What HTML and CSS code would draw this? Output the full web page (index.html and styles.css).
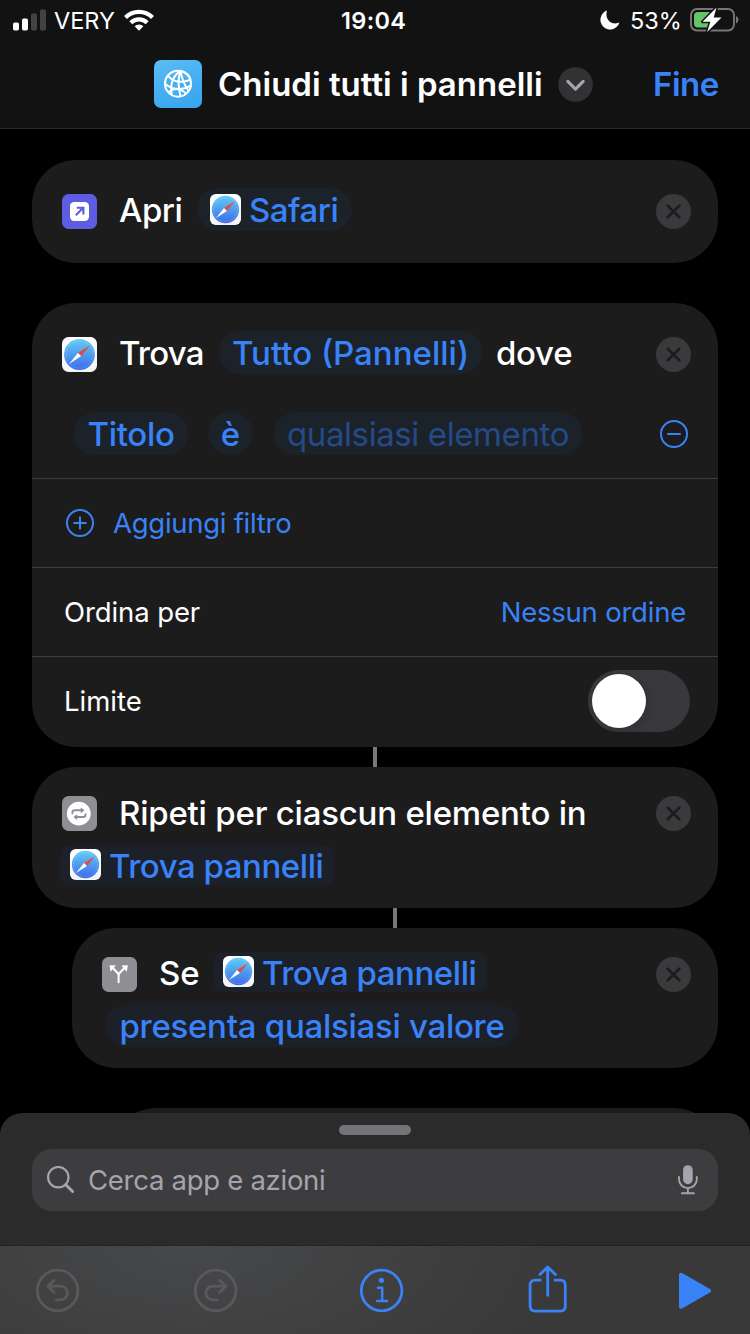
FILE: index.html
```html
<!DOCTYPE html>
<html lang="it">
<head>
<meta charset="utf-8">
<title>Chiudi tutti i pannelli</title>
<link rel="stylesheet" href="styles.css">
</head>
<body>
<svg class="defs" width="0" height="0" aria-hidden="true">
  <defs>
    <linearGradient id="sky" x1="0" y1="0" x2="0" y2="1"><stop offset="0" stop-color="#62cdf5"/><stop offset="1" stop-color="#3c6bea"/></linearGradient>
    <linearGradient id="plate" x1="0" y1="0" x2="0" y2="1"><stop offset="0" stop-color="#fff"/><stop offset="1" stop-color="#f4f4f4"/></linearGradient>
    <symbol id="safari" viewBox="0 0 35 35">
      <rect width="35" height="35" rx="6.5" fill="url(#plate)"/>
      <circle cx="17.5" cy="17.5" r="15.4" fill="url(#sky)"/>
      <circle cx="17.5" cy="17.5" r="13.6" fill="none" stroke="#fff" stroke-opacity=".35" stroke-width="1.2" stroke-dasharray=".6 1.2"/>
      <path d="M28.2 8.2 19.1 19.1 15.9 15.9Z" fill="#e9483f"/>
      <path d="M6.8 27.2 15.9 15.9 19.1 19.1Z" fill="#fff"/>
    </symbol>
    <symbol id="close" viewBox="0 0 35 35">
      <circle cx="17.5" cy="17.5" r="17.5" fill="#3a3a3c"/>
      <path d="M11.7 11.7 23.3 23.3M23.3 11.7 11.7 23.3" stroke="#1c1c1e" stroke-width="2.7" stroke-linecap="round"/>
    </symbol>
  </defs>
</svg>
<div class="screen">
  <header class="top">
    <div class="status">
      <svg class="signal" width="33" height="22" viewBox="0 0 33 22"><g fill="#fff"><rect y="13.5" width="6" height="8" rx="1.7"/><rect x="9" y="9.5" width="6" height="12" rx="1.7"/></g><g fill="#424242"><rect x="18" y="4.5" width="6" height="17" rx="1.7"/><rect x="27" y=".5" width="6" height="21" rx="1.7"/></g></svg>
      <span class="carrier">VERY</span>
      <svg class="wifi" width="30" height="22" viewBox="0 0 30 22"><g fill="none" stroke="#fff" stroke-width="4.2"><path d="M1.5 8.4a19.3 19.3 0 0 1 27 0"/><path d="M6.8 13.8a11.6 11.6 0 0 1 16.4 0"/></g><path d="M15 21.7 10.6 17.3a6.2 6.2 0 0 1 8.8 0Z" fill="#fff"/></svg>
      <span class="clock">19:04</span>
      <svg class="moon" width="20" height="20" viewBox="0 0 20 20"><path d="M7 .6A9.7 9.7 0 1 0 19.4 12.6C13 15.4 4 10.6 7 .6Z" fill="#fff"/></svg>
      <span class="percent">53%</span>
      <svg class="battery" width="49" height="26" viewBox="0 0 49 26"><rect x="1" y="2" width="43" height="21.5" rx="6" fill="none" stroke="#777" stroke-width="1.9"/><path d="M46 9q2.5 1.2 2.5 3.7T46 16.4Z" fill="#777"/><path d="M8 5h15v15.5H8a4 4 0 0 1-4-4V9a4 4 0 0 1 4-4Z" fill="#65c466"/><path d="M26.5.5 12.5 14.8h7.8L17.2 25 31.5 10.6h-7.8Z" fill="#fff" stroke="#121212" stroke-width="3" stroke-linejoin="round" paint-order="stroke"/></svg>
    </div>
    <div class="titlebar">
      <svg class="app-icon" width="48" height="48" viewBox="0 0 48 48"><defs><linearGradient id="app" x1="0" y1="0" x2=".4" y2="1"><stop offset="0" stop-color="#5bbdf4"/><stop offset="1" stop-color="#3aa7ef"/></linearGradient></defs><rect width="48" height="48" rx="7" fill="url(#app)"/><g fill="none" stroke="#fff" stroke-width="2"><circle cx="24" cy="23.7" r="13"/><path d="M26.5 10.8Q14.5 19 18 35.5M26.5 10.8Q22.5 23 26.7 36.6M26.5 10.8Q28 21 34.5 31M26.5 10.8Q35 13.5 36.7 20M14 15.8Q22 25 36 20M11.2 24Q23 33.5 37 25.4M14.5 32Q23 25.5 32 33.5"/></g></svg>
      <span class="title">Chiudi tutti i pannelli</span>
      <svg class="chevron" width="35" height="35" viewBox="0 0 35 35"><circle cx="17.5" cy="17.5" r="17.3" fill="#323234"/><path d="M9.8 14.4 17.5 22.2 25.2 14.4" fill="none" stroke="#a5a5ab" stroke-width="3.1" stroke-linecap="round" stroke-linejoin="round"/></svg>
      <span class="done">Fine</span>
    </div>
  </header>

  <main class="flow">
    <section class="card card-open">
      <div class="row">
        <svg class="icon" viewBox="0 0 35 35"><rect width="35" height="35" rx="6.5" fill="#5e5ce0"/><rect x="8" y="8" width="19" height="19" rx="4.2" fill="#fff"/><path d="M13.8 21.2 20.7 14.3M14.8 13.8h6.6v6.6" fill="none" stroke="#5e5ce0" stroke-width="2.1"/></svg>
        <span class="word w-apri">Apri</span>
        <span class="chip chip-safari"><svg class="mini"><use href="#safari"/></svg><span class="w-safari">Safari</span></span>
        <svg class="close"><use href="#close"/></svg>
      </div>
    </section>

    <section class="card card-find">
      <div class="row">
        <svg class="icon"><use href="#safari"/></svg>
        <span class="word w-trova">Trova</span>
        <span class="chip chip-all"><span class="w-all">Tutto (Pannelli)</span></span>
        <span class="w-dove">dove</span>
        <svg class="close"><use href="#close"/></svg>
      </div>
      <div class="row filter">
        <span class="chip chip-title"><span class="w-titolo">Titolo</span></span>
        <span class="chip chip-is">è</span>
        <span class="chip chip-any"><span class="w-any">qualsiasi elemento</span></span>
        <svg class="minus" width="28" height="28" viewBox="0 0 28 28"><g fill="none" stroke="#3a82f7" stroke-width="2" stroke-linecap="round"><circle cx="14" cy="14" r="13"/><path d="M8 14h12"/></g></svg>
      </div>
      <div class="option">
        <svg class="plus" width="28" height="28" viewBox="0 0 28 28"><g fill="none" stroke="#3a82f7" stroke-width="2" stroke-linecap="round"><circle cx="14" cy="14" r="13"/><path d="M8.3 14h11.4M14 8.3v11.4"/></g></svg>
        <span class="blue w-add">Aggiungi filtro</span>
      </div>
      <div class="option"><span class="w-sort">Ordina per</span><span class="blue w-none">Nessun ordine</span></div>
      <div class="option"><span class="w-limit">Limite</span><span class="switch"><span class="knob"></span></span></div>
    </section>

    <div class="link"></div>

    <section class="card card-repeat">
      <div class="row">
        <svg class="icon" viewBox="0 0 35 35"><rect width="35" height="35" rx="6.5" fill="#8e8e93"/><circle cx="16.8" cy="17.7" r="11.9" fill="#fff"/><g fill="none" stroke="#8e8e93" stroke-width="1.9" stroke-linecap="round" stroke-linejoin="round"><path d="M10.4 17.2v-.6q0-2.3 2.4-2.3h6.5M23.5 18.1v.6q0 2.3-2.4 2.3h-6.5"/></g><path d="M18.7 11.4 22.5 14.3 18.7 17.2ZM15.2 18.2 11.4 21.1 15.2 24Z" fill="#8e8e93"/></svg>
        <span class="word w-repeat">Ripeti per ciascun elemento in</span>
        <svg class="close"><use href="#close"/></svg>
      </div>
      <span class="chip variable"><svg class="mini"><use href="#safari"/></svg><span class="w-found">Trova pannelli</span></span>
    </section>

    <div class="link link-nested"></div>

    <section class="card card-if">
      <div class="row">
        <svg class="icon" viewBox="0 0 35 35"><rect width="35" height="35" rx="6.5" fill="#8e8e93"/><path d="M16.6 25.3v-6.5q0-1.7-1.2-3L11 11.2M16.6 18.8q0-1.7 1.2-3l4.4-4.6" fill="none" stroke="#fff" stroke-width="2" stroke-linecap="round"/><path d="M7.6 8.3 14 8.5 8.5 14.7ZM25.9 8.3 19.2 8.5 24.8 14.7Z" fill="#fff"/></svg>
        <span class="word w-se">Se</span>
        <span class="chip variable"><svg class="mini"><use href="#safari"/></svg><span class="w-found">Trova pannelli</span></span>
        <svg class="close"><use href="#close"/></svg>
      </div>
      <span class="chip chip-has"><span class="w-has">presenta qualsiasi valore</span></span>
    </section>

    <section class="card card-next"></section>
  </main>

  <footer class="sheet">
    <div class="grabber"></div>
    <div class="search">
      <svg class="lens" width="28" height="28" viewBox="0 0 28 28"><g fill="none" stroke="#a5a4ac" stroke-linecap="round"><circle cx="11.3" cy="11.2" r="10.2" stroke-width="2.2"/><path d="M18.8 18.7 25.6 25.5" stroke-width="3"/></g></svg>
      <span class="w-search">Cerca app e azioni</span>
      <svg class="mic" width="20" height="30" viewBox="0 0 20 30"><rect x="5.1" y=".2" width="9.6" height="19" rx="4.8" fill="#a5a4ac"/><path d="M1 12v2.2a8.9 8.9 0 0 0 17.8 0V12M9.9 23v5M3.9 28.3h12" fill="none" stroke="#a5a4ac" stroke-width="1.9" stroke-linecap="round"/></svg>
    </div>
    <nav class="toolbar">
      <svg width="44" height="44" viewBox="0 0 44 44"><g fill="none" stroke="#59595b" stroke-width="2.8" stroke-linecap="round" stroke-linejoin="round"><circle cx="21.6" cy="22.5" r="20.3"/><path d="M18 12.3 11.9 18.2 18 24.2M11.9 18.2H24.7a6.8 6.8 0 0 1 0 13.6H20.4"/></g></svg>
      <svg width="44" height="44" viewBox="0 0 44 44"><g fill="none" stroke="#59595b" stroke-width="2.8" stroke-linecap="round" stroke-linejoin="round"><circle cx="21.6" cy="22.5" r="20.3"/><path d="M25.6 12.3 31.7 18.2 25.6 24.2M31.7 18.2H18.7a6.8 6.8 0 0 0 0 13.6H23"/></g></svg>
      <svg width="44" height="44" viewBox="0 0 44 44"><circle cx="21.6" cy="22.5" r="20.3" fill="none" stroke="#3a82f7" stroke-width="2.8"/><circle cx="21.4" cy="12.3" r="2.6" fill="#3a82f7"/><path d="M17.9 19.7h4.3v13M17.1 33h10" fill="none" stroke="#3a82f7" stroke-width="2.5" stroke-linecap="round" stroke-linejoin="round"/></svg>
      <svg width="40" height="50" viewBox="0 0 40 50"><g fill="none" stroke="#3a82f7" stroke-width="2.8" stroke-linecap="butt" stroke-linejoin="round"><path d="M13.6 15.2H7.1q-5 0-5 5v20.9q0 5 5 5h25.2q5 0 5-5V20.2q0-5-5-5h-6.6"/><path d="M19.7 30.4V2.8M11.9 9.6 19.7 2 27.5 9.6" stroke-linecap="round"/></g></svg>
      <svg width="34" height="38" viewBox="0 0 34 38"><path d="M3 3.7 31 19.7 3 35.7Z" fill="#3a82f7" stroke="#3a82f7" stroke-width="4" stroke-linejoin="round"/></svg>
    </nav>
  </footer>
</div>
</body>
</html>
```
FILE: styles.css
```css
* { box-sizing: border-box; }
body { margin: 0; background: #000; }
.defs { display: block; }
svg { display: block; flex: none; }
span { white-space: nowrap; }
.screen {
  width: 750px; height: 1334px; overflow: hidden;
  display: flex; flex-direction: column;
  background: #000; color: #fff;
  font-family: Inter, "Liberation Sans", sans-serif;
  font-size: 33px; font-weight: 500; line-height: 42px;
}

/* header */
.top { flex: none; height: 129px; background: #121212; border-bottom: 1px solid #2a2a2a; }
.status { height: 40px; display: flex; align-items: center; padding-left: 13px; font-size: 23.5px; font-weight: 400; line-height: 30px; }
.status span { padding-top: 2px; }
.signal { margin-top: -1px; }
.carrier { width: 69px; margin-left: 8px; }
.wifi { margin-left: 1px; }
.clock { width: 69px; margin-left: 187px; font-weight: 600; letter-spacing: .35px; }
.moon { margin-left: 190px; }
.percent { width: 61px; margin-left: 10px; }
.battery { margin-left: -1px; }
.titlebar { height: 88px; display: flex; align-items: center; padding-left: 154px; font-weight: 600; }
.title { width: 340px; margin-left: 16px; }
.done { margin-left: 60px; color: #3a82f7; letter-spacing: -.5px; }

/* action cards */
.flow { flex: none; height: 984px; overflow: hidden; padding: 31px 32px 0; }
.card { background: #1c1c1c; border-radius: 44px; }
.row { display: flex; align-items: center; }
.icon { width: 35px; height: 35px; }
.close { width: 35px; height: 35px; margin-left: auto; }
.card-open .icon, .card-open .close, .card-find .icon, .card-find .close { margin-top: 3px; }
.word { margin-left: 22px; }
.chip { display: inline-flex; align-items: center; height: 43px; border-radius: 21.5px; background: #1c2229; color: #3a82f7; }
.mini { width: 31px; height: 31px; }
.card-open { height: 103px; padding: 28px 27px 0 30px; }
.w-apri { width: 65px; letter-spacing: -.5px; }
.chip-safari { width: 155px; margin-left: 13px; padding-left: 13px; gap: 8px; }
.w-safari { letter-spacing: -.5px; }
.card-find { height: 444px; margin-top: 40px; padding-top: 28px; }
.card-find .row { padding: 0 27px 0 30px; }
.w-trova { width: 86px; letter-spacing: -.8px; }
.chip-all { width: 263px; margin-left: 14px; padding-left: 13px; }
.w-dove { margin-left: 14px; letter-spacing: -.3px; }
.card-find .filter { height: 43px; margin-top: 38px; margin-bottom: 23px; padding: 0 30px 0 42px; }
.chip-title { width: 114px; justify-content: center; letter-spacing: -.3px; }
.chip-is { width: 45px; margin-left: 20px; justify-content: center; }
.chip-any { width: 308px; margin-left: 21px; justify-content: center; color: #254a86; font-weight: 400; letter-spacing: -.4px; }
.minus { margin-left: auto; }
.option { height: 89px; display: flex; align-items: center; justify-content: space-between; padding: 0 32px; border-top: 1px solid #3d3d3e; font-size: 27.5px; font-weight: 400; line-height: 36px; }
.plus { margin-left: 2px; margin-right: 19px; }
.w-add { flex: 1; letter-spacing: -.27px; }
.w-sort { letter-spacing: -.1px; }
.w-none { letter-spacing: -.22px; }
.blue { color: #3a82f7; }
.switch { width: 102px; height: 62px; margin-right: -4px; padding: 4px; border-radius: 31px; background: #39393d; }
.knob { display: block; width: 54px; height: 54px; border-radius: 50%; background: #fff; box-shadow: 3px 3px 10px rgba(0,0,0,.15); }
.link { width: 4px; height: 20px; margin-left: 341px; background: #77777c; }
.link-nested { margin-left: 361px; }
.card-repeat { height: 141px; padding: 25px 27px 0 28px; }
.card-repeat .row { height: 43px; padding-left: 2px; }
.w-repeat { margin-top: -2px; letter-spacing: -.22px; }
.variable { width: 274px; height: 40px; padding-left: 10px; gap: 8px; border-radius: 10px; background: #1c2028; }
.variable .mini { margin-top: -1px; }
.w-found { padding-top: 2px; letter-spacing: -.47px; }
.card-repeat .variable { display: flex; margin-top: 10px; }
.card-if { height: 140px; margin-left: 40px; padding: 24px 27px 0 30px; }
.card-if .row { height: 43px; }
.card-if .icon, .card-if .close { margin-top: 2px; }
.w-se { width: 41px; margin-top: -2px; }
.card-if .variable { margin-left: 13px; margin-top: -3px; }
.chip-has { display: flex; width: 412px; margin: 9px 0 0 4px; justify-content: center; background: #1c2028; letter-spacing: -.28px; }
.card-next { height: 120px; margin: 40px 0 0 80px; }

/* library sheet */
.sheet { flex: none; height: 221px; border-radius: 22px 22px 0 0; background: #2b2b2b; overflow: hidden; }
.grabber { width: 72px; height: 10px; margin: 12px auto 14px; border-radius: 5px; background: #747378; }
.search { display: flex; align-items: center; height: 62px; margin: 0 32px 34px; padding: 0 20px 0 15px; border-radius: 20px; background: #3d3d3f; color: #a5a4ac; font-size: 27.5px; font-weight: 400; }
.w-search { margin-left: 13px; letter-spacing: -.28px; }
.mic { margin-left: auto; }
.toolbar {
  height: 89px; display: grid; grid-template-columns: 158px 166px 168px 150px 34px; align-items: center; padding-left: 36px;
  border-top: 1px solid #242424; background: radial-gradient(ellipse 380px 180px at 190px 0, #474849, #39393a);
}
```
